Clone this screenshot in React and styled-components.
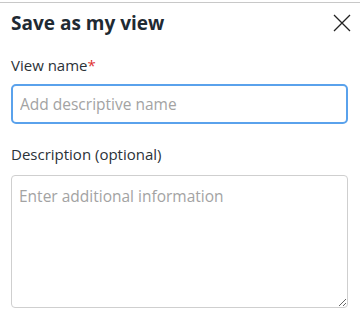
import React from 'react';
import styled, { createGlobalStyle } from 'styled-components';

const GlobalStyle = createGlobalStyle`
    body {
        margin: 0;
        background: #fff;
        font-family: "Open Sans", "Noto Sans", sans-serif;
    }
`;

const Panel = styled.div`
    width: 360px;
    height: 317px;
    box-sizing: border-box;
    border-top: 1px solid #c8c8c8;
    margin-top: 2px;
    padding: 0 12px 0 11px;
    display: flex;
    flex-direction: column;
    overflow: hidden;
`;

const Header = styled.div`
    display: flex;
    align-items: center;
    justify-content: space-between;
    height: 40px;
`;

const Title = styled.h2`
    margin: 0;
    font-size: 19px;
    font-weight: 700;
    color: #1f2a33;
`;

const CloseButton = styled.button`
    border: none;
    background: none;
    padding: 0;
    width: 20px;
    height: 20px;
    margin-right: -4px;
    display: flex;
    align-items: center;
    justify-content: center;
    cursor: pointer;
`;

const Field = styled.div`
    display: flex;
    flex-direction: column;
    gap: ${p => p.$gap}px;
    margin-top: ${p => p.$top}px;
`;

const Label = styled.label`
    font-size: 15px;
    color: #2b3238;
`;

const Required = styled.span`
    color: #e03131;
`;

const Input = styled.input`
    height: 40px;
    box-sizing: border-box;
    border: 2px solid #5aa2ec;
    border-radius: 5px;
    padding: 0 7px;
    font-family: inherit;
    font-size: 15.5px;
    color: #333;
    outline: none;
    &::placeholder { color: #a3a3a3; }
`;

const TextArea = styled.textarea`
    height: 133px;
    box-sizing: border-box;
    border: 1px solid #cfcfcf;
    border-radius: 4px;
    padding: 9px 7px;
    font-family: inherit;
    font-size: 15.5px;
    color: #333;
    resize: vertical;
    outline: none;
    &::placeholder { color: #a3a3a3; }
`;

const App = () => {
    return (
        <>
            <GlobalStyle />
            <Panel>
                <Header>
                    <Title>Save as my view</Title>
                    <CloseButton aria-label="Close">
                        <svg width="18" height="18" viewBox="0 0 18 18">
                            <path d="M1 1 L17 17 M17 1 L1 17" stroke="#222" strokeWidth="1.3" />
                        </svg>
                    </CloseButton>
                </Header>
                <Field $top={12} $gap={9}>
                    <Label>View name<Required>*</Required></Label>
                    <Input placeholder="Add descriptive name" autoFocus />
                </Field>
                <Field $top={20} $gap={11}>
                    <Label>Description (optional)</Label>
                    <TextArea placeholder="Enter additional information" />
                </Field>
            </Panel>
        </>
    );
};

export default App;
